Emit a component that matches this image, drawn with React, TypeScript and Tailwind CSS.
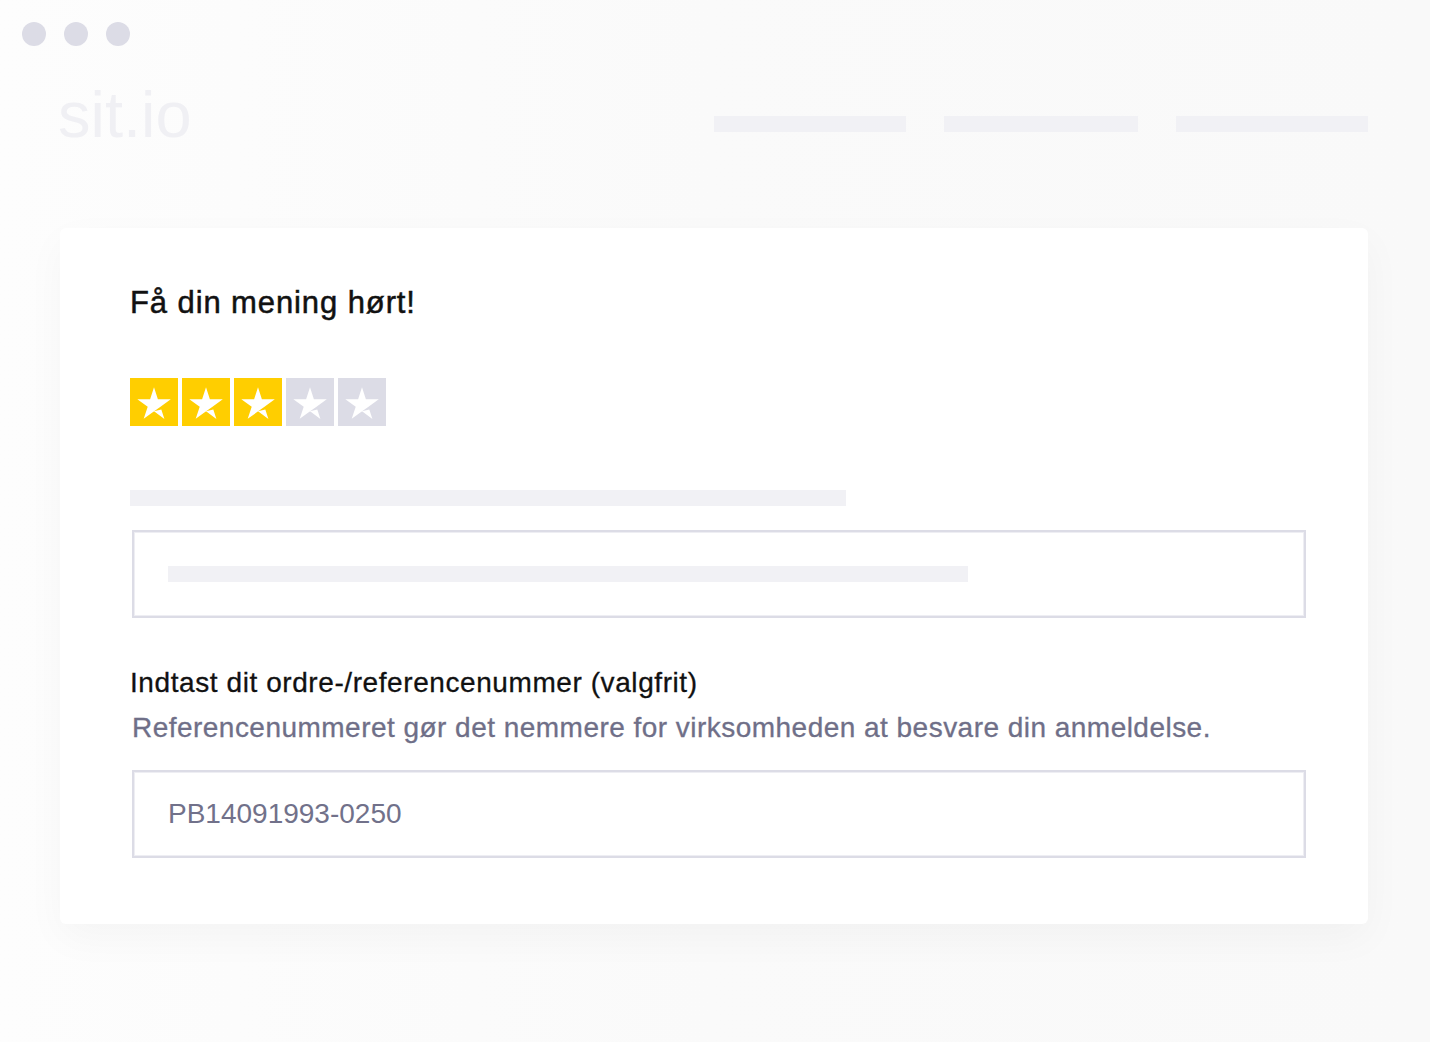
import React from "react";

const FONT = { fontFamily: '"Liberation Sans", Arial, Helvetica, sans-serif' };

function Star({ on }: { on: boolean }) {
  return (
    <div className={`w-12 h-12 ${on ? "bg-[#ffce00]" : "bg-[#dcdce6]"}`}>
      <svg viewBox="2 2 42 42" className="w-12 h-12">
        <path
          fill="#fff"
          d="M23 31.2l6.4-1.6 2.7 8.2L23 31.2zm14.6-10.5H26.4L23 10.2l-3.4 10.5H8.4l9.1 6.5-3.5 10.5 9.1-6.5 5.6-4 9-6.5z"
        />
      </svg>
    </div>
  );
}

export default function App() {
  const rating = 3;

  return (
    <div
      className="w-full h-[1042px] overflow-hidden bg-gradient-to-r from-[#fdfdfd] via-[#fafafa] to-[#f9f9f9]"
      style={FONT}
    >
      {/* window dots */}
      <div className="flex gap-[18px] pt-[22px] pl-[22px]">
        <span className="w-6 h-6 rounded-full bg-[#dcdce6]" />
        <span className="w-6 h-6 rounded-full bg-[#dcdce6]" />
        <span className="w-6 h-6 rounded-full bg-[#dcdce6]" />
      </div>

      <div className="w-[1308px] ml-[60px]">
        {/* site header */}
        <div className="flex items-start justify-between mt-[37px]">
          <span className="text-[65px] leading-[64px] text-[#f0f0f4] -ml-[2px]">sit.io</span>
          <div className="flex gap-[38px] mt-[33px]">
            <div className="w-[192px] h-4 bg-[#f1f1f5]" />
            <div className="w-[194px] h-4 bg-[#f1f1f5]" />
            <div className="w-[192px] h-4 bg-[#f1f1f5]" />
          </div>
        </div>

        {/* review card */}
        <div className="mt-[81px] bg-white rounded-md shadow-[0_14px_40px_rgba(0,0,0,0.035)] px-[70px] pt-[57px] pb-[66px]">
          <h1 className="text-[31px] leading-[36px] tracking-[0.9px] text-[#111] [-webkit-text-stroke:0.5px_#111]">
            Få din mening hørt!
          </h1>

          <div className="flex gap-1 mt-[57px]">
            {[1, 2, 3, 4, 5].map((n) => (
              <Star key={n} on={n <= rating} />
            ))}
          </div>

          <div className="w-[716px] h-4 bg-[#f1f1f5] mt-16" />

          <div className="ml-[2px] w-[1174px] h-[88px] mt-6 border-2 border-[#dcdce6] shadow-[inset_0_0_0_1px_#eeeef3] px-[34px] pt-[34px]">
            <div className="w-[800px] h-4 bg-[#f1f1f5]" />
          </div>

          <label className="block mt-[49px] text-[28px] leading-[32px] tracking-[0.58px] text-[#111] [-webkit-text-stroke:0.3px_#111]">
            Indtast dit ordre-/referencenummer (valgfrit)
          </label>
          <p className="ml-[2px] mt-[13px] text-[28px] leading-[32px] tracking-[0.47px] text-[#6f6f88] [-webkit-text-stroke:0.3px_#6f6f88]">
            Referencenummeret gør det nemmere for virksomheden at besvare din anmeldelse.
          </p>

          <div className="ml-[2px] w-[1174px] h-[88px] mt-[26px] border-2 border-[#dcdce6] shadow-[inset_0_0_0_1px_#eeeef3] px-[34px] flex items-center">
            <span className="text-[28px] text-[#71718a]">PB14091993-0250</span>
          </div>
        </div>
      </div>
    </div>
  );
}
